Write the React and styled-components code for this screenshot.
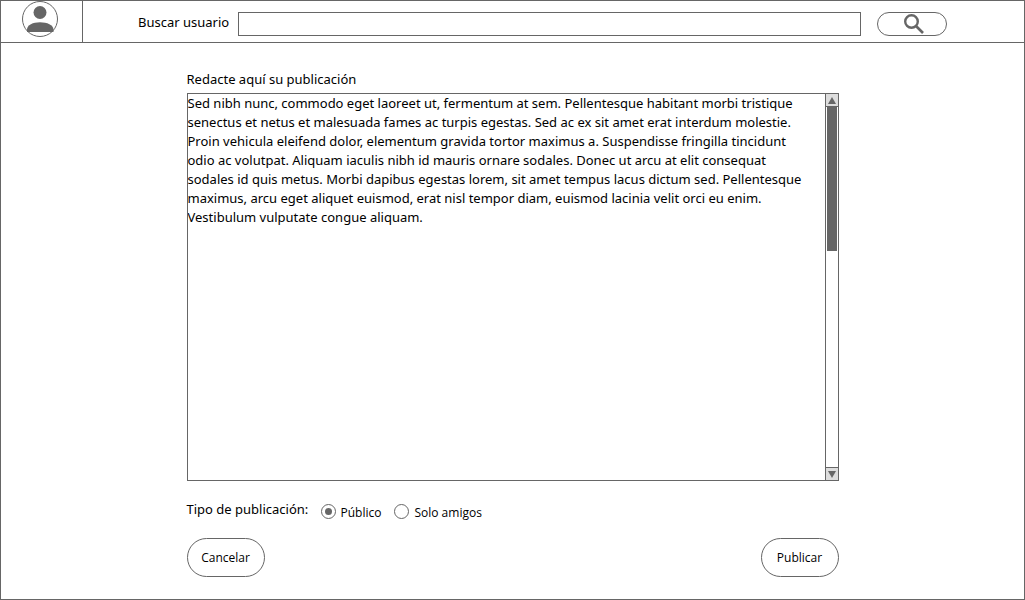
import React, { useState } from "react";
import styled, { createGlobalStyle } from "styled-components";

const line = "#666666";

const GlobalStyle = createGlobalStyle`
  *, *::before, *::after { box-sizing: border-box; }
  body {
    margin: 0;
    background: #fff;
    color: #000;
    font-family: "Noto Sans", "Open Sans", sans-serif;
    font-size: 13px;
    line-height: 19px;
  }
  button, input, textarea { font: inherit; color: inherit; }
`;

const Page = styled.div`
  display: flex;
  flex-direction: column;
  min-height: 100vh;
  border: 1px solid ${line};
`;

const Header = styled.header`
  display: flex;
  height: 42px;
  border-bottom: 1px solid ${line};
`;

const ProfileLink = styled.a`
  display: flex;
  justify-content: center;
  flex: none;
  width: 82px;
  padding-right: 3px;
  border-right: 1px solid ${line};
`;

const SearchForm = styled.form`
  display: flex;
  flex: 1;
  align-items: center;
  padding: 4px 77px 0 55px;
`;

const SearchLabel = styled.label`
  flex: none;
  width: 100px;
  padding-bottom: 2px;
`;

const SearchInput = styled.input`
  flex: 1;
  min-width: 0;
  height: 24px;
  margin-right: 16px;
  padding: 0 4px;
  border: 1px solid ${line};
  border-radius: 0;
  background: #fff;
  outline: none;
`;

const PillButton = styled.button`
  display: flex;
  align-items: center;
  justify-content: center;
  flex: none;
  width: ${(p) => (p.$compact ? "70px" : "78px")};
  height: ${(p) => (p.$compact ? "24px" : "39px")};
  padding: ${(p) => (p.$compact ? "0 0 0 4px" : "0")};
  border: 1px solid ${line};
  border-radius: 20px;
  background: #fff;
  font-family: "Open Sans", "Noto Sans", sans-serif;
  font-size: 12px;
  cursor: pointer;
`;

const Composer = styled.form`
  display: flex;
  flex-direction: column;
  flex: 1;
  width: 100%;
  max-width: 652px;
  margin: 0 auto;
  padding: 27px 0 22px;
`;

const ComposerLabel = styled.label`
  margin-bottom: 4px;
`;

const EditorBox = styled.div`
  display: flex;
  flex: 1;
  min-height: 240px;
  border: 1px solid ${line};
`;

const Editor = styled.textarea`
  flex: 1;
  min-width: 0;
  margin: 0;
  padding: 0 12px 0 0;
  border: 0;
  background: transparent;
  outline: none;
  resize: none;
  scrollbar-width: none;
`;

const ScrollBar = styled.div`
  display: flex;
  flex-direction: column;
  flex: none;
  width: 13px;
  border-left: 1px solid ${line};
`;

const ScrollButton = styled.button`
  display: flex;
  align-items: center;
  justify-content: center;
  height: 13px;
  padding: 0;
  border: 0 solid ${line};
  border-bottom-width: ${(p) => (p.$up ? "1px" : "0")};
  border-top-width: ${(p) => (p.$up ? "0" : "1px")};
  background: #dddddd;
`;

const Track = styled.div`
  flex: 1;
  padding: 0 1px;
`;

const Thumb = styled.div`
  height: 40%;
  background: ${line};
`;

const Audience = styled.fieldset`
  display: flex;
  align-items: flex-start;
  min-width: 0;
  margin: 18px 0 16px;
  padding: 0;
  border: 0;
`;

const AudienceTitle = styled.span`
  width: 134px;
  padding-top: 1px;
`;

const Option = styled.label`
  display: flex;
  align-items: center;
  gap: 5px;
  margin-right: 13px;
  padding-top: 2px;
  font-family: "Open Sans", "Noto Sans", sans-serif;
  font-size: 12px;
`;

const OptionText = styled.span`
  padding-top: 2px;
`;

const Radio = styled.input`
  appearance: none;
  display: grid;
  place-items: center;
  width: 15px;
  height: 15px;
  margin: 0;
  border: 1px solid ${line};
  border-radius: 50%;
  background: #fff;

  &:checked::before {
    content: "";
    width: 7px;
    height: 7px;
    border-radius: 50%;
    background: ${line};
  }
`;

const Actions = styled.div`
  display: flex;
  justify-content: space-between;
`;

const text =
  "Sed nibh nunc, commodo eget laoreet ut, fermentum at sem. Pellentesque habitant morbi tristique senectus et netus et malesuada fames ac turpis egestas. Sed ac ex sit amet erat interdum molestie. Proin vehicula eleifend dolor, elementum gravida tortor maximus a. Suspendisse fringilla tincidunt odio ac volutpat. Aliquam iaculis nibh id mauris ornare sodales. Donec ut arcu at elit consequat sodales id quis metus. Morbi dapibus egestas lorem, sit amet tempus lacus dictum sed. Pellentesque maximus, arcu eget aliquet euismod, erat nisl tempor diam, euismod lacinia velit orci eu enim. Vestibulum vulputate congue aliquam.";

function AvatarIcon() {
  return (
    <svg width="38" height="38" viewBox="0 0 38 38" aria-hidden="true">
      <circle cx="19" cy="18" r="17.5" fill="#fff" stroke={line} />
      <circle cx="19" cy="11.5" r="6.5" fill={line} />
      <path d="M6 31V28.5C6 24 12 21.2 19 21.2S32.5 24 32.5 28.5V31Z" fill={line} />
    </svg>
  );
}

function SearchIcon() {
  return (
    <svg width="22" height="22" viewBox="0 0 22 22" fill="none" stroke={line} aria-hidden="true">
      <circle cx="8.5" cy="8.5" r="6.3" strokeWidth="2.4" />
      <path d="M13 13L20 20" strokeWidth="2.6" />
    </svg>
  );
}

function Arrow({ up }) {
  return (
    <svg width="8" height="7" viewBox="0 0 8 7" aria-hidden="true">
      <path d={up ? "M4 0L8 7H0Z" : "M0 0H8L4 7Z"} fill={line} />
    </svg>
  );
}

export default function App() {
  const [audience, setAudience] = useState("publico");
  return (
    <>
      <GlobalStyle />
      <Page>
        <Header>
          <ProfileLink href="#perfil" aria-label="Perfil">
            <AvatarIcon />
          </ProfileLink>
          <SearchForm role="search" onSubmit={(e) => e.preventDefault()}>
            <SearchLabel htmlFor="buscar">Buscar usuario</SearchLabel>
            <SearchInput id="buscar" type="text" />
            <PillButton $compact type="submit" aria-label="Buscar">
              <SearchIcon />
            </PillButton>
          </SearchForm>
        </Header>
        <Composer onSubmit={(e) => e.preventDefault()}>
          <ComposerLabel htmlFor="publicacion">Redacte aquí su publicación</ComposerLabel>
          <EditorBox>
            <Editor id="publicacion" defaultValue={text} spellCheck={false} />
            <ScrollBar>
              <ScrollButton $up type="button" aria-label="Subir">
                <Arrow up />
              </ScrollButton>
              <Track>
                <Thumb />
              </Track>
              <ScrollButton type="button" aria-label="Bajar">
                <Arrow />
              </ScrollButton>
            </ScrollBar>
          </EditorBox>
          <Audience aria-labelledby="tipo">
            <AudienceTitle id="tipo">Tipo de publicación:</AudienceTitle>
            <Option>
              <Radio
                type="radio"
                name="tipo"
                checked={audience === "publico"}
                onChange={() => setAudience("publico")}
              />
              <OptionText>Público</OptionText>
            </Option>
            <Option>
              <Radio
                type="radio"
                name="tipo"
                checked={audience === "amigos"}
                onChange={() => setAudience("amigos")}
              />
              <OptionText>Solo amigos</OptionText>
            </Option>
          </Audience>
          <Actions>
            <PillButton type="button">Cancelar</PillButton>
            <PillButton type="submit">Publicar</PillButton>
          </Actions>
        </Composer>
      </Page>
    </>
  );
}
